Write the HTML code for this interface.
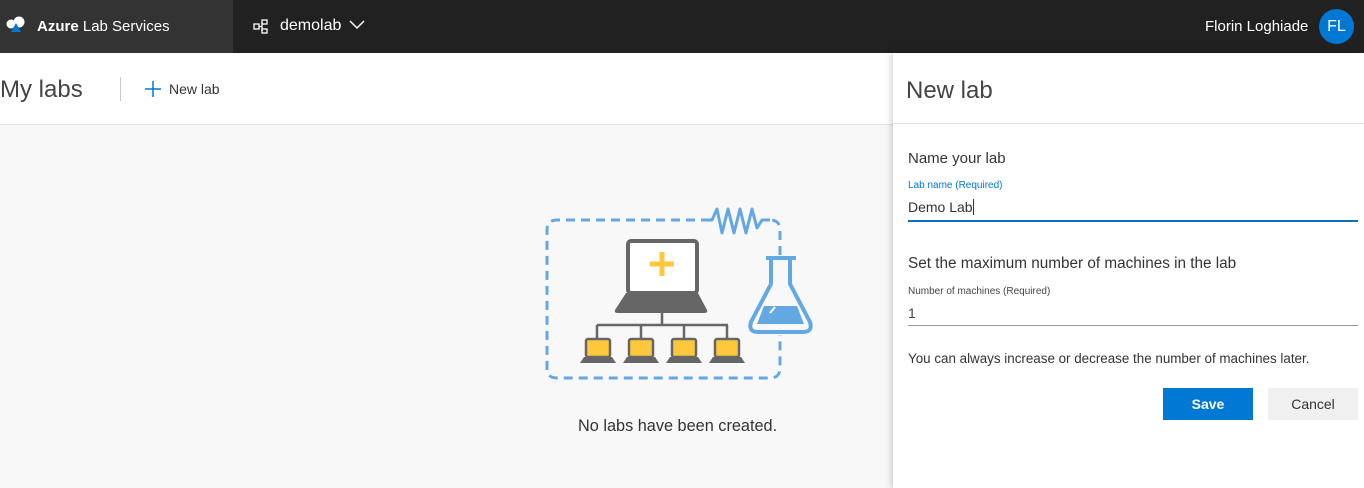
<!DOCTYPE html>
<html><head><style>
*{margin:0;padding:0;box-sizing:border-box}
body{width:1364px;height:488px;overflow:hidden;font-family:"Liberation Sans",sans-serif;background:#f8f8f8;position:relative;color:#333}
.top{position:absolute;left:0;top:0;width:1364px;height:53px;background:#212121}
.brand{position:absolute;left:0;top:0;width:233px;height:53px;background:#333;color:#fff;font-size:15px}
.abs{position:absolute}
.hdr{position:absolute;left:0;top:53px;width:893px;height:72px;background:#fff;border-bottom:1px solid #e1e1e1}
.panel{position:absolute;left:893px;top:53px;width:471px;height:435px;background:#fff;box-shadow:-2px 0 6px rgba(0,0,0,.18)}
</style></head><body>
<div class="top"></div>
<div class="brand">
<svg class="abs" style="left:5px;top:15px" width="22" height="20" viewBox="0 0 22 20"><circle cx="6" cy="9" r="4.5" fill="#fff"/><circle cx="14" cy="7" r="5.5" fill="#fff"/><path d="M11 8 L16 17 L6 17 Z" fill="#0078d4"/></svg>
<div class="abs" style="left:37px;top:18px"><b>Azure</b> Lab Services</div>
</div>
<svg class="abs" style="left:253px;top:19px" width="16" height="16" viewBox="0 0 16 16" fill="none" stroke="#fff" stroke-width="1.3"><rect x="9" y="1" width="5" height="4"/><rect x="9" y="10" width="5" height="4"/><rect x="1" y="5" width="5" height="5"/><path d="M6 7.5H9M9 3v9"/></svg>
<div class="abs" style="left:280px;top:17px;color:#fff;font-size:16px">demolab</div>
<svg class="abs" style="left:349px;top:20px" width="16" height="10" viewBox="0 0 16 10"><path d="M1 1l7 7 7-7" fill="none" stroke="#fff" stroke-width="1.5"/></svg>
<div class="abs" style="left:1205px;top:18px;color:#fff;font-size:15px">Florin Loghiade</div>
<div class="abs" style="left:1319px;top:9px;width:35px;height:35px;border-radius:50%;background:#0078d4;color:#fff;font-size:16px;text-align:center;line-height:35px">FL</div>

<div class="hdr">
<div class="abs" style="left:0;top:23px;font-size:24px;color:#444">My labs</div>
<div class="abs" style="left:120px;top:24px;width:1px;height:24px;background:#c8c8c8"></div>
<svg class="abs" style="left:145px;top:28px" width="16" height="16"><path d="M8 0v16M0 8h16" stroke="#0078d4" stroke-width="1.5"/></svg>
<div class="abs" style="left:169px;top:28px;font-size:14px;color:#333">New lab</div>
</div>

<svg class="abs" style="left:540px;top:200px" width="280" height="185" viewBox="540 200 280 185">
<path d="M710 220 H557 Q547 220 547 230 V368 Q547 378 557 378 H770 Q780 378 780 368 V335 M780 255 V230 Q780 220 770 220" fill="none" stroke="#63a8e3" stroke-width="3" stroke-dasharray="9 6"/>
<path d="M706 220 L712 220 L717 209 L722 233 L728 209 L734 233 L740 209 L746 233 L752 209 L757 228 L762 220 L770 220" fill="none" stroke="#63a8e3" stroke-width="3" stroke-linejoin="round"/>
<rect x="628" y="241" width="69" height="52" rx="3" fill="#fff" stroke="#666" stroke-width="4"/>
<path d="M662 252v24M650 264h24" stroke="#fdc83b" stroke-width="5"/>
<path d="M626 293 H698 L707 310 Q708 313 704 313 H618 Q614 313 615 310 Z" fill="#666"/>
<path d="M662 313v12M597 325h131M597 325v13M641 325v13M684 325v13M727 325v13" stroke="#666" stroke-width="2.5" fill="none"/>
<g fill="#fdc83b" stroke="#666" stroke-width="2.5">
<rect x="586" y="339" width="24" height="18" rx="2"/><rect x="629" y="339" width="24" height="18" rx="2"/><rect x="672" y="339" width="24" height="18" rx="2"/><rect x="715" y="339" width="24" height="18" rx="2"/></g>
<g fill="#666"><path d="M584 357h28l4 6h-36z"/><path d="M627 357h28l4 6h-36z"/><path d="M670 357h28l4 6h-36z"/><path d="M713 357h28l4 6h-36z"/></g>
<path d="M766 258h30M771 258v26L751 322Q748 332 758 332H803Q813 332 810 322L790 284V258" fill="none" stroke="#63a8e3" stroke-width="4" stroke-linejoin="round"/>
<path d="M764 306H797L804 324H757Z" fill="#63a8e3"/>
<path d="M770 313l5 -6" stroke="#fff" stroke-width="2"/>
</svg>
<div class="abs" style="left:578px;top:417px;font-size:16.3px;color:#333">No labs have been created.</div>

<div class="panel">
<div class="abs" style="left:13px;top:24px;font-size:24px;color:#444">New lab</div>
<div class="abs" style="left:0;top:70px;width:471px;height:1px;background:#e1e1e1"></div>
<div class="abs" style="left:15px;top:97px;font-size:15px">Name your lab</div>
<div class="abs" style="left:15px;top:127px;font-size:10px;color:#0078d4">Lab name (Required)</div>
<div class="abs" style="left:15px;top:146px;font-size:14px">Demo Lab<span style="display:inline-block;width:1px;height:16px;background:#333;vertical-align:-3px"></span></div>
<div class="abs" style="left:15px;top:167px;width:450px;height:2px;background:#106ebe"></div>
<div class="abs" style="left:15px;top:202px;font-size:15.3px">Set the maximum number of machines in the lab</div>
<div class="abs" style="left:15px;top:233px;font-size:10px;color:#444">Number of machines (Required)</div>
<div class="abs" style="left:15px;top:252px;font-size:14px;color:#444">1</div>
<div class="abs" style="left:15px;top:272px;width:450px;height:1px;background:#999"></div>
<div class="abs" style="left:15px;top:298px;font-size:13.4px;color:#333">You can always increase or decrease the number of machines later.</div>
<div class="abs" style="left:270px;top:335px;width:90px;height:32px;background:#0078d4;color:#fff;font-size:14px;font-weight:bold;text-align:center;line-height:32px">Save</div>
<div class="abs" style="left:375px;top:335px;width:90px;height:32px;background:#f0f0f0;color:#333;font-size:14px;text-align:center;line-height:32px">Cancel</div>
</div>
</body></html>
